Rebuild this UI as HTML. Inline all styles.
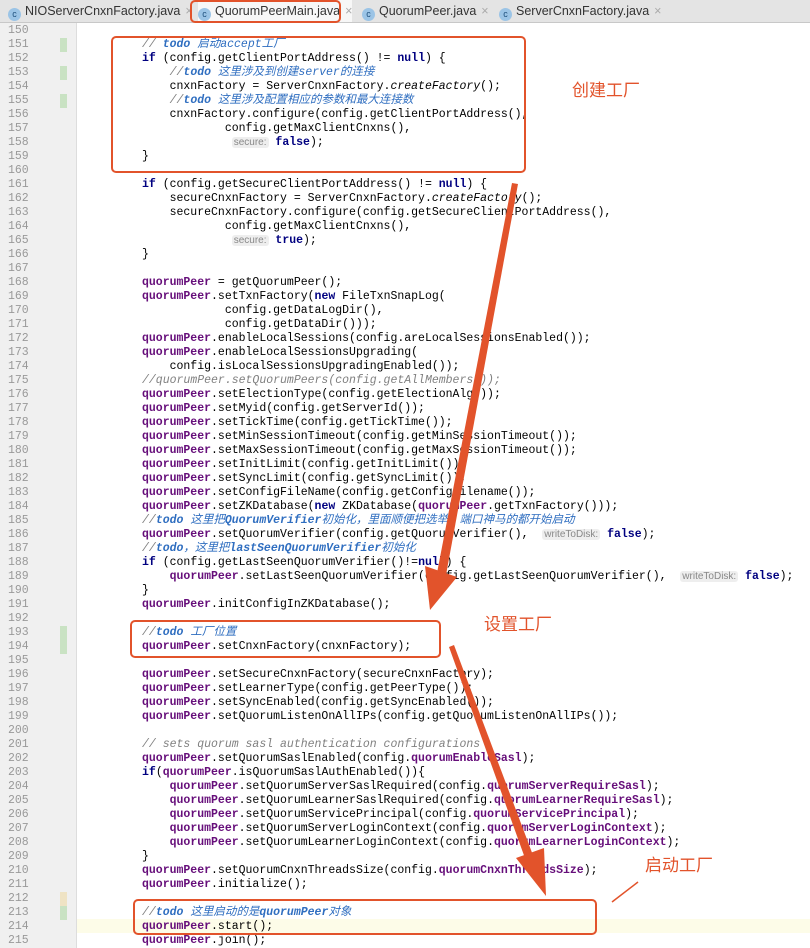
<!DOCTYPE html>
<html><head><meta charset="utf-8"><style>
body{margin:0;width:810px;height:948px;overflow:hidden;background:#fff;position:relative;font-family:"Liberation Mono","Noto Sans CJK SC",monospace}
.tabs{position:absolute;left:0;top:0;width:810px;height:22px;background:#e4e4e4;border-bottom:1px solid #c8c8c8;font-family:"Liberation Sans",sans-serif;font-size:12.5px;color:#333}
.tab{position:absolute;top:0;height:22px;line-height:22px;white-space:nowrap}
.ci{display:inline-block;width:13px;height:13px;border-radius:50%;background:#9bc4e6;color:#1d4f7c;font-size:9px;line-height:13px;text-align:center;vertical-align:-2px;margin-right:4px}
.x{color:#aaa;margin-left:5px}
.gut{position:absolute;left:0;top:23px;width:76px;height:925px;background:#f0f0f0;border-right:1px solid #ddd}
.ln{position:absolute;left:8px;top:24px;font-size:11.5px;line-height:14px;color:#999;white-space:pre}
.mk{position:absolute;left:60px;width:7px;background:#c9e2c3}
pre{position:absolute;left:142px;top:24px;margin:0;font-family:"Liberation Mono","Noto Sans CJK SC",monospace;font-size:11.5px;line-height:14px;color:#000;white-space:pre}
.k{color:#000080;font-weight:bold}.f{color:#660e7a;font-weight:bold}.c{color:#808080;font-style:italic}
.t{color:#2f6ec0;font-style:italic}.i{font-style:italic}
.h{font-family:"Liberation Sans",sans-serif;font-size:10px;color:#888;background:#eee;border-radius:3px;padding:0 2px}
.box{position:absolute;border:2px solid #e2532b;border-radius:5px}
.lbl{position:absolute;color:#e2532b;font-family:"Liberation Sans","Noto Sans CJK SC",sans-serif;font-size:17px}
</style></head><body>
<div class="tabs">
<div class="tab" style="left:8px"><span class="ci">c</span>NIOServerCnxnFactory.java<span class="x">×</span></div>
<div class="tab" style="left:198px;background:#f7f7f7;height:22px"><span class="ci">c</span>QuorumPeerMain.java<span class="x">×</span></div>
<div class="tab" style="left:362px"><span class="ci">c</span>QuorumPeer.java<span class="x">×</span></div>
<div class="tab" style="left:499px"><span class="ci">c</span>ServerCnxnFactory.java<span class="x">×</span></div>
</div>
<div class="box" style="left:190px;top:0;width:147px;height:19px"></div>
<div class="gut"></div>
<div style="position:absolute;left:77px;top:919px;width:733px;height:14px;background:#fdfce8"></div>
<div class="mk" style="top:38px;height:14px"></div>
<div class="mk" style="top:66px;height:14px"></div>
<div class="mk" style="top:94px;height:14px"></div>
<div class="mk" style="top:626px;height:28px"></div>
<div class="mk" style="top:892px;height:14px;background:#efe3c4"></div>
<div class="mk" style="top:906px;height:14px"></div>
<div class="ln">150
151
152
153
154
155
156
157
158
159
160
161
162
163
164
165
166
167
168
169
170
171
172
173
174
175
176
177
178
179
180
181
182
183
184
185
186
187
188
189
190
191
192
193
194
195
196
197
198
199
200
201
202
203
204
205
206
207
208
209
210
211
212
213
214
215</div>
<pre>

<span class="c">// </span><span class="t"><b>todo</b> 启动accept工厂</span>
<span class="k">if</span> (config.getClientPortAddress() != <span class="k">null</span>) {
    <span class="c">//</span><span class="t"><b>todo</b> 这里涉及到创建server的连接</span>
    cnxnFactory = ServerCnxnFactory.<span class="i">createFactory</span>();
    <span class="c">//</span><span class="t"><b>todo</b> 这里涉及配置相应的参数和最大连接数</span>
    cnxnFactory.configure(config.getClientPortAddress(),
            config.getMaxClientCnxns(),
             <span class="h">secure:</span> <span class="k">false</span>);
}

<span class="k">if</span> (config.getSecureClientPortAddress() != <span class="k">null</span>) {
    secureCnxnFactory = ServerCnxnFactory.<span class="i">createFactory</span>();
    secureCnxnFactory.configure(config.getSecureClientPortAddress(),
            config.getMaxClientCnxns(),
             <span class="h">secure:</span> <span class="k">true</span>);
}

<span class="f">quorumPeer</span> = getQuorumPeer();
<span class="f">quorumPeer</span>.setTxnFactory(<span class="k">new</span> FileTxnSnapLog(
            config.getDataLogDir(),
            config.getDataDir()));
<span class="f">quorumPeer</span>.enableLocalSessions(config.areLocalSessionsEnabled());
<span class="f">quorumPeer</span>.enableLocalSessionsUpgrading(
    config.isLocalSessionsUpgradingEnabled());
<span class="c">//quorumPeer.setQuorumPeers(config.getAllMembers());</span>
<span class="f">quorumPeer</span>.setElectionType(config.getElectionAlg());
<span class="f">quorumPeer</span>.setMyid(config.getServerId());
<span class="f">quorumPeer</span>.setTickTime(config.getTickTime());
<span class="f">quorumPeer</span>.setMinSessionTimeout(config.getMinSessionTimeout());
<span class="f">quorumPeer</span>.setMaxSessionTimeout(config.getMaxSessionTimeout());
<span class="f">quorumPeer</span>.setInitLimit(config.getInitLimit());
<span class="f">quorumPeer</span>.setSyncLimit(config.getSyncLimit());
<span class="f">quorumPeer</span>.setConfigFileName(config.getConfigFilename());
<span class="f">quorumPeer</span>.setZKDatabase(<span class="k">new</span> ZKDatabase(<span class="f">quorumPeer</span>.getTxnFactory()));
<span class="c">//</span><span class="t"><b>todo</b> 这里把<b>QuorumVerifier</b>初始化，里面顺便把选举，端口神马的都开始启动</span>
<span class="f">quorumPeer</span>.setQuorumVerifier(config.getQuorumVerifier(),  <span class="h">writeToDisk:</span> <span class="k">false</span>);
<span class="c">//</span><span class="t"><b>todo</b>，这里把<b>lastSeenQuorumVerifier</b>初始化</span>
<span class="k">if</span> (config.getLastSeenQuorumVerifier()!=<span class="k">null</span>) {
    <span class="f">quorumPeer</span>.setLastSeenQuorumVerifier(config.getLastSeenQuorumVerifier(),  <span class="h">writeToDisk:</span> <span class="k">false</span>);
}
<span class="f">quorumPeer</span>.initConfigInZKDatabase();

<span class="c">//</span><span class="t"><b>todo</b> 工厂位置</span>
<span class="f">quorumPeer</span>.setCnxnFactory(cnxnFactory);

<span class="f">quorumPeer</span>.setSecureCnxnFactory(secureCnxnFactory);
<span class="f">quorumPeer</span>.setLearnerType(config.getPeerType());
<span class="f">quorumPeer</span>.setSyncEnabled(config.getSyncEnabled());
<span class="f">quorumPeer</span>.setQuorumListenOnAllIPs(config.getQuorumListenOnAllIPs());

<span class="c">// sets quorum sasl authentication configurations</span>
<span class="f">quorumPeer</span>.setQuorumSaslEnabled(config.<span class="f">quorumEnableSasl</span>);
<span class="k">if</span>(<span class="f">quorumPeer</span>.isQuorumSaslAuthEnabled()){
    <span class="f">quorumPeer</span>.setQuorumServerSaslRequired(config.<span class="f">quorumServerRequireSasl</span>);
    <span class="f">quorumPeer</span>.setQuorumLearnerSaslRequired(config.<span class="f">quorumLearnerRequireSasl</span>);
    <span class="f">quorumPeer</span>.setQuorumServicePrincipal(config.<span class="f">quorumServicePrincipal</span>);
    <span class="f">quorumPeer</span>.setQuorumServerLoginContext(config.<span class="f">quorumServerLoginContext</span>);
    <span class="f">quorumPeer</span>.setQuorumLearnerLoginContext(config.<span class="f">quorumLearnerLoginContext</span>);
}
<span class="f">quorumPeer</span>.setQuorumCnxnThreadsSize(config.<span class="f">quorumCnxnThreadsSize</span>);
<span class="f">quorumPeer</span>.initialize();

<span class="c">//</span><span class="t"><b>todo</b> 这里启动的是<b>quorumPeer</b>对象</span>
<span class="f">quorumPeer</span>.start();
<span class="f">quorumPeer</span>.join();</pre>
<div class="box" style="left:111px;top:36px;width:411px;height:133px"></div>
<div class="box" style="left:130px;top:620px;width:307px;height:34px"></div>
<div class="box" style="left:133px;top:899px;width:460px;height:32px"></div>
<div class="lbl" style="left:572px;top:76px">创建工厂</div>
<div class="lbl" style="left:484px;top:610px">设置工厂</div>
<div class="lbl" style="left:645px;top:851px">启动工厂</div>
<svg style="position:absolute;left:0;top:0" width="810" height="948">
<polygon points="512,183 518,184 446,575 437,573" fill="#e2532b"/>
<polygon points="425,566 457,577 430,610" fill="#e2532b"/>
<polygon points="449,647 454,645 534,858 526,861" fill="#e2532b"/>
<polygon points="516,858 544,848 546,896" fill="#e2532b"/>
<line x1="612" y1="902" x2="638" y2="882" stroke="#e2532b" stroke-width="1.5"/>
</svg>
</body></html>
